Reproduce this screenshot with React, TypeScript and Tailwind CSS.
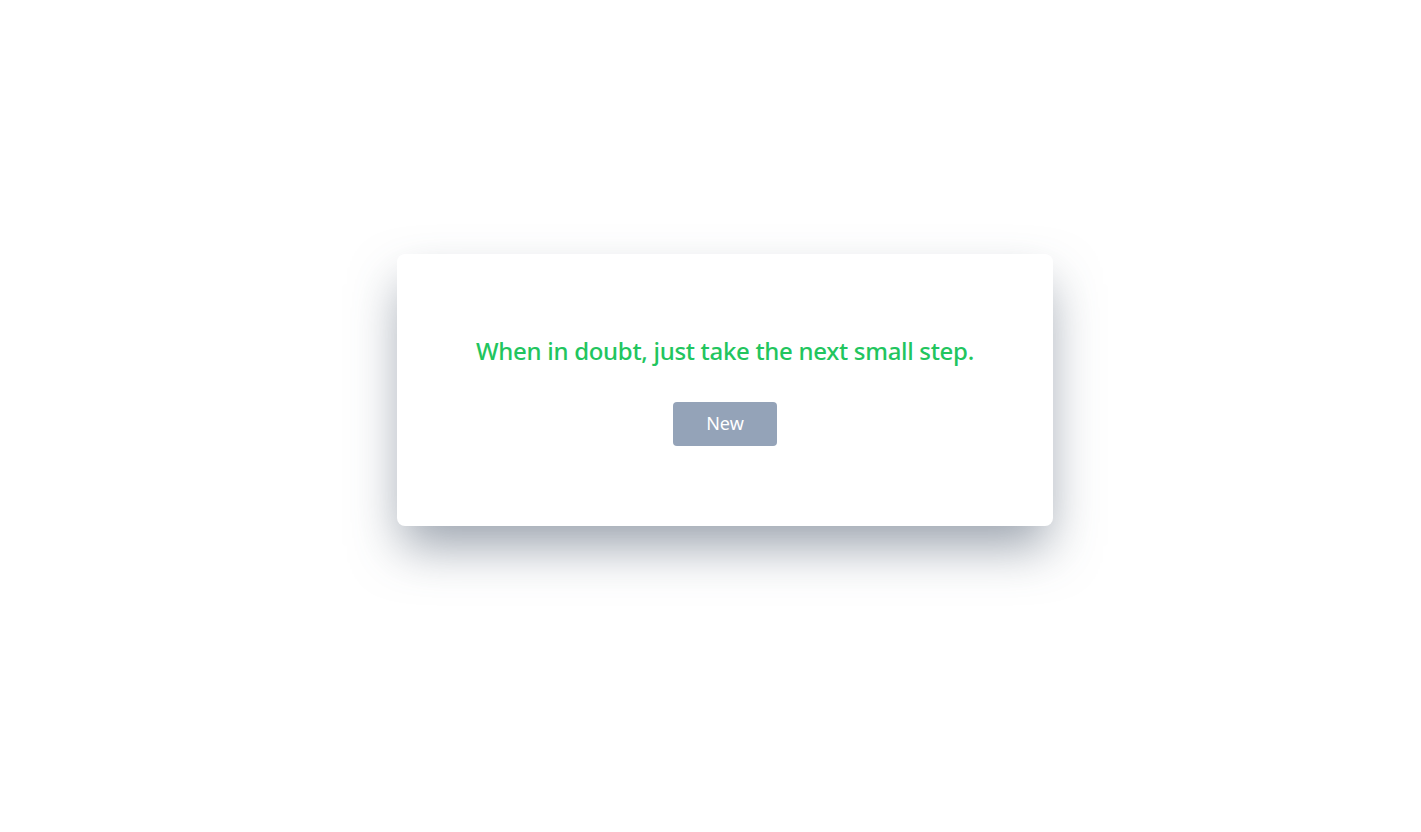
export default function App() {
  return (
    <div className="min-h-screen w-full bg-white flex items-center justify-center pl-[29px] pb-[52px]" style={{ fontFamily: '"Noto Sans", "Open Sans", sans-serif' }}>
      <div className="w-[656px] h-[272px] bg-white rounded-lg shadow-[0_25px_50px_-5px_rgba(71,85,105,0.55)] flex flex-col items-center justify-center gap-[35px]">
        <h1 className="text-[24px] leading-8 font-medium text-[#22c55e] tracking-[-0.3px]">
          When in doubt, just take the next small step.
        </h1>
        <button className="w-[104px] h-[44px] rounded bg-[#94a3b8] text-white text-[18px]">
          New
        </button>
      </div>
    </div>
  )
}
